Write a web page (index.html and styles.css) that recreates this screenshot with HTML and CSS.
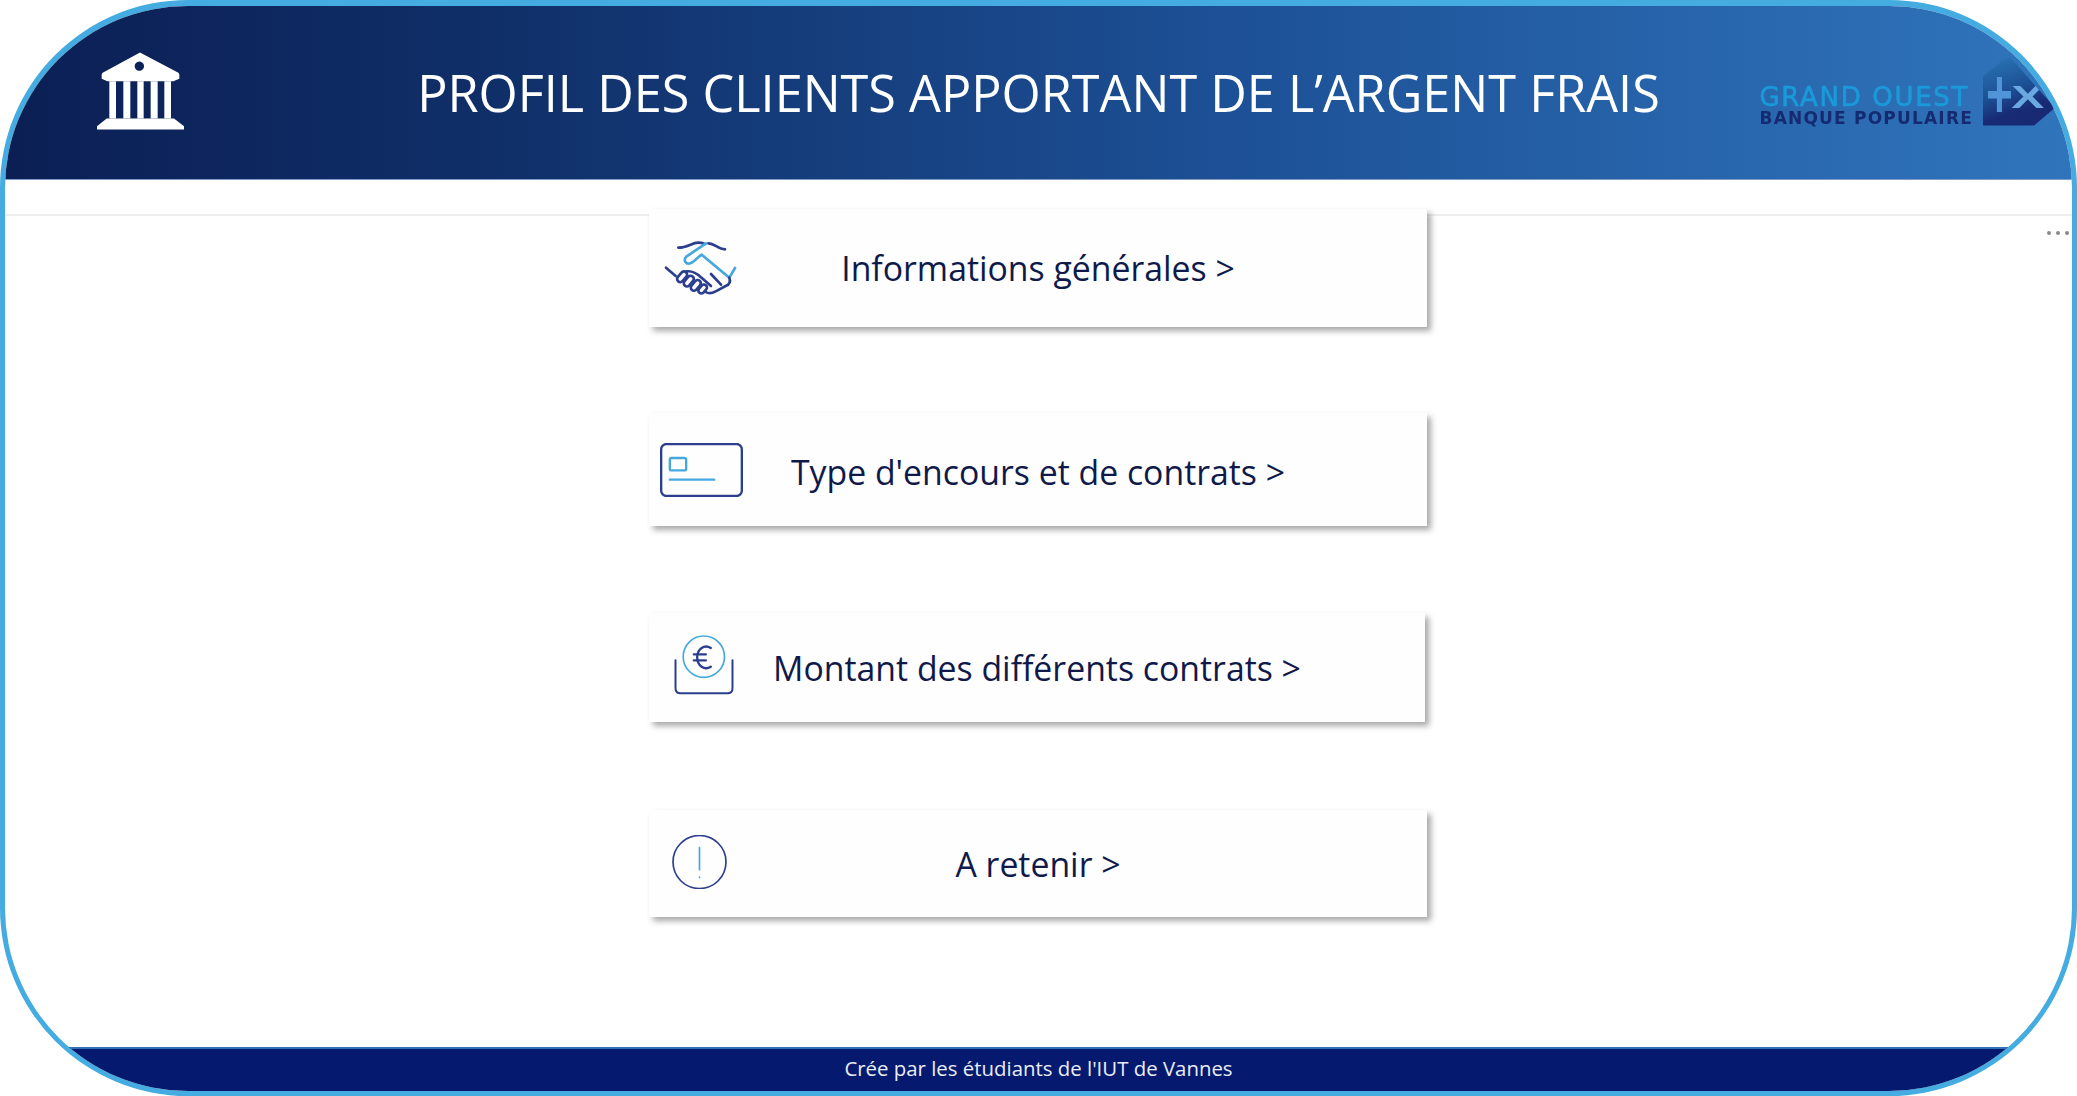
FILE: index.html
```html
<!DOCTYPE html>
<html lang="fr">
<head>
	<meta charset="UTF-8">
	<title>Profil des clients apportant de l'argent frais</title>
	<link rel="stylesheet" href="styles.css">
</head>
<body>
	<div class="frame">
		<header class="header">
			<svg class="bank" viewBox="291 157 261 231">
				<path fill-rule="evenodd" d="M420 157L535 218L538 222V236L520 243H322L305 236V222L308 218ZM418 184a14 14 0 1 0 .1 0Z"/>
				<path d="M328 243H348V355H328ZM370 243H391V355H370ZM412 243H431V355H412ZM452 243H473V355H452ZM493 243H513V355H493Z"/>
				<path d="M320 355H522L552 378V388H291V378Z"/>
			</svg>
			<h1 class="title">PROFIL DES CLIENTS APPORTANT DE L’ARGENT FRAIS</h1>
			<div class="logo">
				<div class="logo-words">
					<span class="logo-top">GRAND OUEST</span>
					<span class="logo-bottom">BANQUE POPULAIRE</span>
				</div>
				<div class="logo-mark"><span class="mark-plus">+</span><span class="mark-x">X</span></div>
			</div>
		</header>

		<div class="strip"></div>
		<div class="dots"><i></i><i></i><i></i></div>

		<main class="cards">
			<a class="card card-1" href="javascript:;">
				<svg class="icon icon-hands" viewBox="0 0 252 192" fill="none" stroke-width="8" stroke-linecap="round" stroke-linejoin="round">
					<path class="dark" d="M52 35C78 36 92 20 112 20C120 20 126 22 132 24M142 22C160 22 172 40 192 40"/>
					<path class="light" d="M135 22L76 62C66 72 74 86 88 82C98 78 110 64 122 56L205 125M205 125L222 96"/>
					<path class="dark" d="M15 95L44 120"/>
					<rect class="dark" x="45" y="113" width="36" height="19" rx="9.5" transform="rotate(-50 63 122)"/>
					<rect class="dark" x="65" y="126" width="36" height="19" rx="9.5" transform="rotate(-50 83 135)"/>
					<rect class="dark" x="86" y="139" width="36" height="19" rx="9.5" transform="rotate(-50 104 148)"/>
					<rect class="dark" x="110" y="150" width="30" height="18" rx="9" transform="rotate(-50 125 159)"/>
					<path class="dark" d="M76 106C92 104 108 112 120 124L150 150M150 114L180 146M205 125C210 138 204 146 194 150L164 166C150 174 140 172 134 168"/>
				</svg>
				<span class="label">Informations générales &gt;</span>
			</a>
			<a class="card card-2" href="javascript:;">
				<svg class="icon icon-bank-card" viewBox="60 726 248 162" fill="none" stroke-width="7" stroke-linecap="round">
					<rect class="dark" x="63" y="729" width="242" height="156" rx="16"/>
					<rect class="light" x="89" y="771" width="49" height="37" rx="5"/>
					<path class="light" d="M89 836H222"/>
				</svg>
				<span class="label">Type d'encours et de contrats &gt;</span>
			</a>
			<a class="card card-3" href="javascript:;">
				<svg class="icon icon-euro" viewBox="100 105 185 180" fill="none" stroke-width="5" stroke-linecap="round">
					<circle class="light" cx="192" cy="170" r="62"/>
					<path class="dark" stroke-width="6" d="M107 181V264Q107 280 122 280H263Q278 280 278 264V181"/>
					<path class="dark" stroke-width="7" d="M213 144C194 132 172 146 172 172C172 198 194 212 213 200M162 163H198M162 181H198"/>
				</svg>
				<span class="label">Montant des différents contrats &gt;</span>
			</a>
			<a class="card card-4" href="javascript:;">
				<svg class="icon icon-alert" viewBox="95 705 170 160" fill="none" stroke-width="5" stroke-linecap="round">
					<circle class="dark" cx="180" cy="785" r="79"/>
					<path class="light" d="M180 742V808M180 830V831"/>
				</svg>
				<span class="label">A retenir &gt;</span>
			</a>
		</main>

		<footer class="footer">Crée par les étudiants de l'IUT de Vannes</footer>
	</div>
</body>
</html>
```

FILE: styles.css
```css
*{margin:0;padding:0;box-sizing:border-box;}
body{background:#fff;font-family:"Open Sans","Noto Sans",sans-serif;}
a{text-decoration:none;}

.frame{height:100vh;border:solid #44ace0;border-width:6px 5px 5px;border-radius:188px;overflow:hidden;display:flex;flex-direction:column;position:relative;background:#fff;}

/* bandeau du haut */
.header{height:174px;flex:none;display:grid;grid-template-columns:1fr auto 1fr;align-items:center;background:linear-gradient(90deg,#0b1f54 0%,#10306a 25%,#1d5197 60%,#3075bc 100%);border-bottom:1px solid #7f9cc8;}
.bank{width:87px;height:78px;margin-left:92px;margin-top:-4px;fill:#fff;}
.title{font-size:50.4px;font-weight:400;color:#fff;white-space:nowrap;}

.logo{justify-self:end;display:flex;align-items:flex-end;gap:10px;margin-top:-2px;filter:blur(.6px);}
.logo-words{display:flex;flex-direction:column;align-items:flex-start;font-family:"DejaVu Sans",sans-serif;line-height:1;margin-bottom:-1px;}
.logo-top{font-size:26px;letter-spacing:1.7px;color:#1a9ad8;-webkit-text-stroke:.6px #1a9ad8;}
.logo-bottom{font-size:17px;font-weight:700;letter-spacing:1.2px;color:#152a70;}
.logo-mark{width:72px;height:68px;margin-right:17px;padding-left:3px;display:flex;align-items:center;background:linear-gradient(160deg,#2a78b8 0%,#1c4f94 45%,#182a74 70%);clip-path:polygon(0 28%,32% 0,38% 0,100% 74%,71% 100%,0 100%);font-family:"Liberation Sans",sans-serif;font-weight:700;line-height:1;}
.mark-plus{font-size:46px;color:#4f95d8;margin-top:2px;transform:scaleY(1.5);}
.mark-x{font-size:32px;color:#69a8e0;margin:10px 0 0 4px;transform:scaleX(1.55);}

.strip{height:36px;flex:none;border-bottom:2px solid #eee;}
.dots{position:absolute;top:225px;right:3px;display:flex;gap:5px;}
.dots i{width:4px;height:4px;border-radius:50%;background:#8a8a8a;}

/* les 4 boutons */
.cards{flex:1;display:flex;flex-direction:column;align-items:center;margin-top:-7px;}
.card{width:778px;display:grid;grid-template-columns:110px 1fr 110px;align-items:center;background:#fefefe;box-shadow:4px 4px 6px rgba(0,0,0,.34);color:#0f1a4b;margin-left:-1px;}
.card-1{height:118px;}
.card-2{height:113px;margin-top:86px;padding-top:4px;}
.card-3{height:109px;margin-top:87px;width:776px;margin-left:-3px;}
.card-4{height:107px;margin-top:88px;}

.label{font-size:33.8px;text-align:center;white-space:nowrap;}
.icon{display:block;}
.dark{stroke:#2c3f8f;}
.light{stroke:#45a8de;}
.icon-hands{width:84px;height:64px;margin-left:12px;}
.icon-bank-card{width:83px;height:54px;margin-left:11px;margin-top:-4px;}
.icon-euro{width:62px;height:60px;margin-left:24px;margin-top:-5px;}
.icon-alert{width:57px;height:54px;margin-left:22px;margin-top:-4px;}

.footer{height:44px;flex:none;padding-bottom:5px;background:#051a6e;border-top:2px solid #3270b8;color:#e9edf5;font-size:20.4px;display:flex;align-items:center;justify-content:center;}
```
